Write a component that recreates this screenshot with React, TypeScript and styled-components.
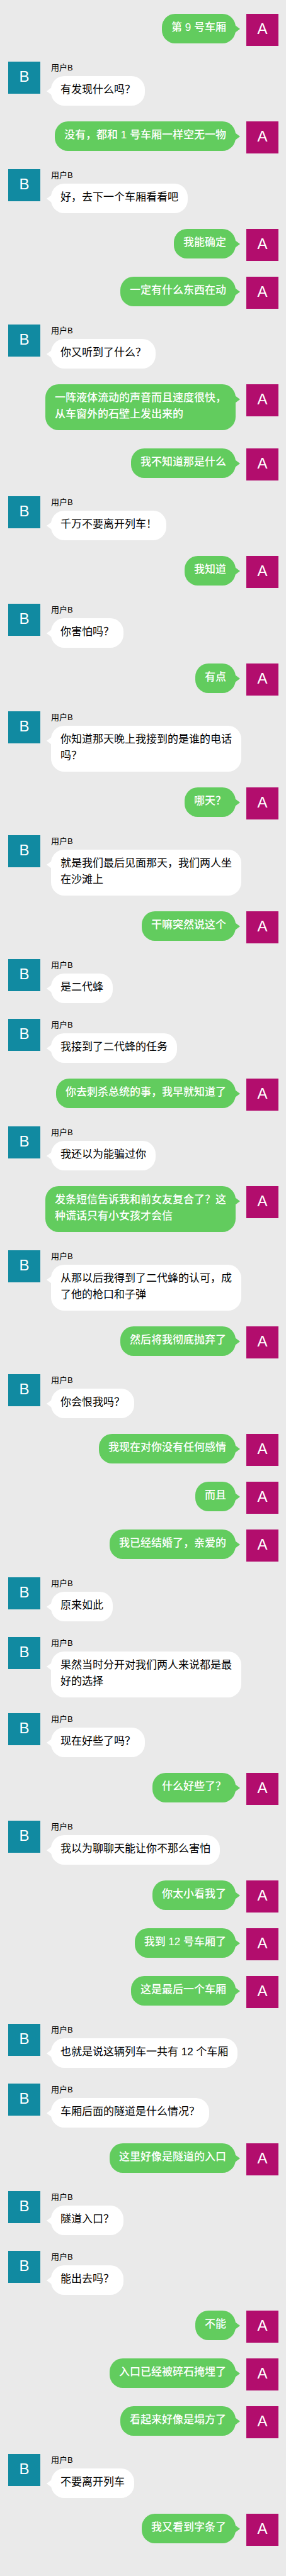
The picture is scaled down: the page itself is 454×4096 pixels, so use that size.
import React from 'react';
import styled, { createGlobalStyle, css } from 'styled-components';

type Side = 'A' | 'B';

const GlobalStyle = createGlobalStyle`
  *, *::before, *::after { box-sizing: border-box; }
  body {
    margin: 0;
    background: #eaeaea;
    font-family: "Liberation Sans", "Noto Sans CJK SC", sans-serif;
  }
`;

const Conversation = styled.ol`
  display: flex;
  flex-direction: column;
  gap: 25px;
  min-height: 100vh;
  margin: 0;
  padding: 22px 12px 47px 13px;
  list-style: none;
`;

const Message = styled.li<{ $side: Side }>`
  display: flex;
  flex-direction: ${({ $side }) => ($side === 'A' ? 'row-reverse' : 'row')};
  align-items: flex-start;
  gap: 17px;
`;

const Avatar = styled.div<{ $side: Side }>`
  flex: none;
  width: 51px;
  height: 51px;
  background: ${({ $side }) => ($side === 'A' ? '#b20d6d' : '#118aa1')};
  color: #fff;
  font-size: 24px;
  line-height: 48px;
  text-align: center;
`;

const Body = styled.div<{ $side: Side }>`
  display: flex;
  flex: 1;
  flex-direction: column;
  min-width: 0;
  ${({ $side }) =>
    $side === 'A'
      ? css`
          align-items: flex-end;
          padding: 0 0 4px 59px;
        `
      : css`
          align-items: flex-start;
          padding: 0 59px 0 0;
        `}
`;

const Name = styled.span`
  height: 23px;
  color: #000;
  font-size: 13px;
  line-height: 20px;
`;

const Bubble = styled.p<{ $side: Side }>`
  position: relative;
  margin: 0;
  padding: 9px 15px 12px;
  border-radius: 21px;
  background: ${({ $side }) => ($side === 'A' ? '#62cc5e' : '#fff')};
  color: ${({ $side }) => ($side === 'A' ? '#fff' : '#000')};
  font-size: 17px;
  font-weight: ${({ $side }) => ($side === 'A' ? 500 : 400)};
  line-height: 26px;

  &::after {
    content: '';
    position: absolute;
    top: 18px;
    width: 8px;
    height: 12px;
    background: inherit;
    ${({ $side }) =>
      $side === 'A'
        ? css`
            right: -7px;
            clip-path: polygon(0 0, 100% 50%, 0 100%);
          `
        : css`
            left: -7px;
            clip-path: polygon(100% 0, 0 50%, 100% 100%);
          `}
  }
`;

const messages: [Side, string][] = [
  ['A', '第 9 号车厢'],
  ['B', '有发现什么吗？'],
  ['A', '没有，都和 1 号车厢一样空无一物'],
  ['B', '好，去下一个车厢看看吧'],
  ['A', '我能确定'],
  ['A', '一定有什么东西在动'],
  ['B', '你又听到了什么？'],
  ['A', '一阵液体流动的声音而且速度很快，从车窗外的石壁上发出来的'],
  ['A', '我不知道那是什么'],
  ['B', '千万不要离开列车！'],
  ['A', '我知道'],
  ['B', '你害怕吗？'],
  ['A', '有点'],
  ['B', '你知道那天晚上我接到的是谁的电话吗？'],
  ['A', '哪天？'],
  ['B', '就是我们最后见面那天，我们两人坐在沙滩上'],
  ['A', '干嘛突然说这个'],
  ['B', '是二代蜂'],
  ['B', '我接到了二代蜂的任务'],
  ['A', '你去刺杀总统的事，我早就知道了'],
  ['B', '我还以为能骗过你'],
  ['A', '发条短信告诉我和前女友复合了？这种谎话只有小女孩才会信'],
  ['B', '从那以后我得到了二代蜂的认可，成了他的枪口和子弹'],
  ['A', '然后将我彻底抛弃了'],
  ['B', '你会恨我吗？'],
  ['A', '我现在对你没有任何感情'],
  ['A', '而且'],
  ['A', '我已经结婚了，亲爱的'],
  ['B', '原来如此'],
  ['B', '果然当时分开对我们两人来说都是最好的选择'],
  ['B', '现在好些了吗？'],
  ['A', '什么好些了？'],
  ['B', '我以为聊聊天能让你不那么害怕'],
  ['A', '你太小看我了'],
  ['A', '我到 12 号车厢了'],
  ['A', '这是最后一个车厢'],
  ['B', '也就是说这辆列车一共有 12 个车厢'],
  ['B', '车厢后面的隧道是什么情况？'],
  ['A', '这里好像是隧道的入口'],
  ['B', '隧道入口？'],
  ['B', '能出去吗？'],
  ['A', '不能'],
  ['A', '入口已经被碎石掩埋了'],
  ['A', '看起来好像是塌方了'],
  ['B', '不要离开列车'],
  ['A', '我又看到字条了'],
];

export default function App() {
  return (
    <main lang="zh-CN">
      <GlobalStyle />
      <Conversation>
        {messages.map(([side, text], index) => (
          <Message key={index} $side={side}>
            <Avatar $side={side}>{side}</Avatar>
            <Body $side={side}>
              {side === 'B' && <Name>用户B</Name>}
              <Bubble $side={side}>{text}</Bubble>
            </Body>
          </Message>
        ))}
      </Conversation>
    </main>
  );
}
